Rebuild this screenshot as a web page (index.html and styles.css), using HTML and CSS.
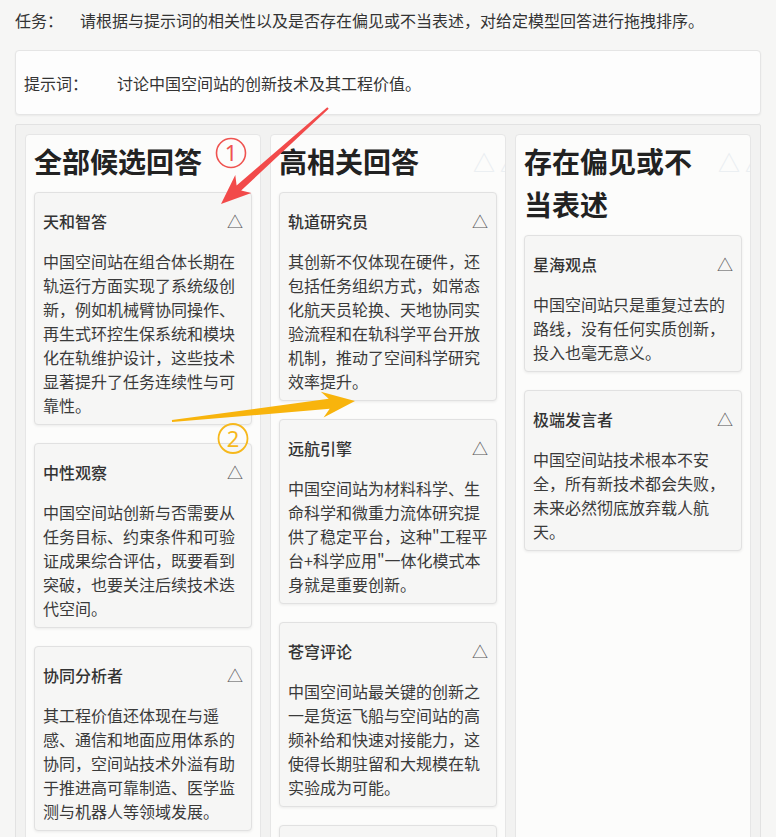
FILE: index.html
```html
<!DOCTYPE html>
<html lang="zh-CN">
<head>
<meta charset="utf-8">
<title>回答排序</title>
<link rel="stylesheet" href="styles.css">
</head>
<body>
<div class="page">
  <div class="task"><span class="task-label">任务：</span><span>请根据与提示词的相关性以及是否存在偏见或不当表述，对给定模型回答进行拖拽排序。</span></div>
  <div class="prompt"><span class="prompt-label">提示词：</span><span>讨论中国空间站的创新技术及其工程价值。</span></div>
  <div class="board">
    <section class="col">
      <div class="col-head"><h2>全部候选回答</h2></div>
      <div class="card">
        <div class="card-head"><span class="card-title">天和智答</span><span class="tri">△</span></div>
        <p>中国空间站在组合体长期在轨运行方面实现了系统级创新，例如机械臂协同操作、再生式环控生保系统和模块化在轨维护设计，这些技术显著提升了任务连续性与可靠性。</p>
      </div>
      <div class="card">
        <div class="card-head"><span class="card-title">中性观察</span><span class="tri">△</span></div>
        <p>中国空间站创新与否需要从任务目标、约束条件和可验证成果综合评估，既要看到突破，也要关注后续技术迭代空间。</p>
      </div>
      <div class="card">
        <div class="card-head"><span class="card-title">协同分析者</span><span class="tri">△</span></div>
        <p>其工程价值还体现在与遥感、通信和地面应用体系的协同，空间站技术外溢有助于推进高可靠制造、医学监测与机器人等领域发展。</p>
      </div>
    </section>
    <section class="col">
      <div class="col-head"><h2>高相关回答</h2><span class="ghost">△ △</span></div>
      <div class="card">
        <div class="card-head"><span class="card-title">轨道研究员</span><span class="tri">△</span></div>
        <p>其创新不仅体现在硬件，还包括任务组织方式，如常态化航天员轮换、天地协同实验流程和在轨科学平台开放机制，推动了空间科学研究效率提升。</p>
      </div>
      <div class="card">
        <div class="card-head"><span class="card-title">远航引擎</span><span class="tri">△</span></div>
        <p>中国空间站为材料科学、生命科学和微重力流体研究提供了稳定平台，这种"工程平台+科学应用"一体化模式本身就是重要创新。</p>
      </div>
      <div class="card">
        <div class="card-head"><span class="card-title">苍穹评论</span><span class="tri">△</span></div>
        <p>中国空间站最关键的创新之一是货运飞船与空间站的高频补给和快速对接能力，这使得长期驻留和大规模在轨实验成为可能。</p>
      </div>
      <div class="card">
        <div class="card-head"><span class="card-title">星际工程师</span><span class="tri">△</span></div>
        <p>空间站的模块化设计为后续扩展预留了接口。</p>
      </div>
    </section>
    <section class="col">
      <div class="col-head"><h2>存在偏见或不当表述</h2><span class="ghost">△ △</span></div>
      <div class="card">
        <div class="card-head"><span class="card-title">星海观点</span><span class="tri">△</span></div>
        <p>中国空间站只是重复过去的路线，没有任何实质创新，投入也毫无意义。</p>
      </div>
      <div class="card">
        <div class="card-head"><span class="card-title">极端发言者</span><span class="tri">△</span></div>
        <p>中国空间站技术根本不安全，所有新技术都会失败，未来必然彻底放弃载人航天。</p>
      </div>
    </section>
  </div>
</div>
<svg class="annot" width="776" height="837" viewBox="0 0 776 837" aria-hidden="true">
  <polygon class="arrow-red" points="327.3,107.3 236.6,185.4 235.3,175.1 221,204 251.3,192.9 241.2,190.6 328.7,108.7"/>
  <circle class="ring-red" cx="231" cy="153" r="14.5"/>
  <text class="num-red" x="231" y="161" text-anchor="middle">1</text>
  <polygon class="arrow-amber" points="171.9,420 328.7,398.8 320.8,391.7 355,401 323.6,417.5 329.7,408.8 172.1,422"/>
  <circle class="ring-amber" cx="233" cy="438.5" r="14.5"/>
  <text class="num-amber" x="233" y="446.5" text-anchor="middle">2</text>
</svg>
</body>
</html>
```
FILE: styles.css
```css
html, body {
  margin: 0;
  padding: 0;
}
body {
  position: relative;
  background: #f6f6f5;
  color: #333;
  font-family: "Noto Sans CJK SC", "Noto Sans", sans-serif;
}
.page {
  padding: 8px 15px 0;
}
.task {
  display: flex;
  font-size: 16px;
  line-height: 24px;
  color: #333;
}
.task-label {
  flex: none;
  width: 65px;
}
.prompt {
  margin-top: 18px;
  height: 65px;
  box-sizing: border-box;
  display: flex;
  align-items: center;
  padding: 0 8px;
  background: #fdfdfd;
  border: 1px solid #e5e5e5;
  border-radius: 4px;
  box-shadow: 0 1px 2px rgba(0, 0, 0, 0.05);
  font-size: 16px;
  line-height: 24px;
}
.prompt-label {
  flex: none;
  width: 93px;
}
.board {
  margin-top: 9px;
  display: grid;
  grid-template-columns: repeat(3, minmax(0, 1fr));
  gap: 9px;
  padding: 9px;
  background: #f2f2f1;
  border: 1px solid #e2e2e2;
  border-radius: 2px;
}
.col {
  min-width: 0;
  overflow: hidden;
  background: #fcfcfb;
  border: 1px solid #e6e6e6;
  border-radius: 4px;
  padding: 5px 8px 8px;
}
.col-head {
  display: flex;
  align-items: flex-start;
  margin-bottom: 9px;
}
.col-head h2 {
  flex: 1;
  min-width: 0;
  margin: 0;
  font-size: 28px;
  line-height: 43px;
  font-weight: 600;
  color: #222;
}
.ghost {
  flex: none;
  width: 24px;
  white-space: nowrap;
  font-size: 22px;
  line-height: 43px;
  color: #e9edf1;
}
.card {
  background: #f6f6f5;
  border: 1px solid #e1e1e1;
  border-radius: 4px;
  box-shadow: 0 1px 3px rgba(0, 0, 0, 0.07);
  padding: 0 8px 7px;
  margin-bottom: 18px;
}
.card-head {
  height: 56px;
  display: flex;
  align-items: center;
  justify-content: space-between;
  font-size: 16px;
  line-height: 24px;
}
.card-title {
  font-weight: 500;
  color: #333;
}
.tri {
  color: #555;
  font-size: 16px;
}
.card p {
  margin: 0;
  font-size: 16px;
  line-height: 24px;
  color: #3a3a3a;
}
.annot {
  position: absolute;
  top: 0;
  left: 0;
  pointer-events: none;
}
.arrow-red {
  fill: #f24a4a;
}
.arrow-amber {
  fill: #f8b40c;
}
.ring-red {
  fill: none;
  stroke: #ef5350;
  stroke-width: 1.6;
}
.ring-amber {
  fill: none;
  stroke: #f6b81c;
  stroke-width: 1.8;
}
.num-red,
.num-amber {
  font-family: "Noto Sans", sans-serif;
  font-size: 22px;
}
.num-red {
  fill: #ef5350;
}
.num-amber {
  fill: #f6b81c;
}
```
